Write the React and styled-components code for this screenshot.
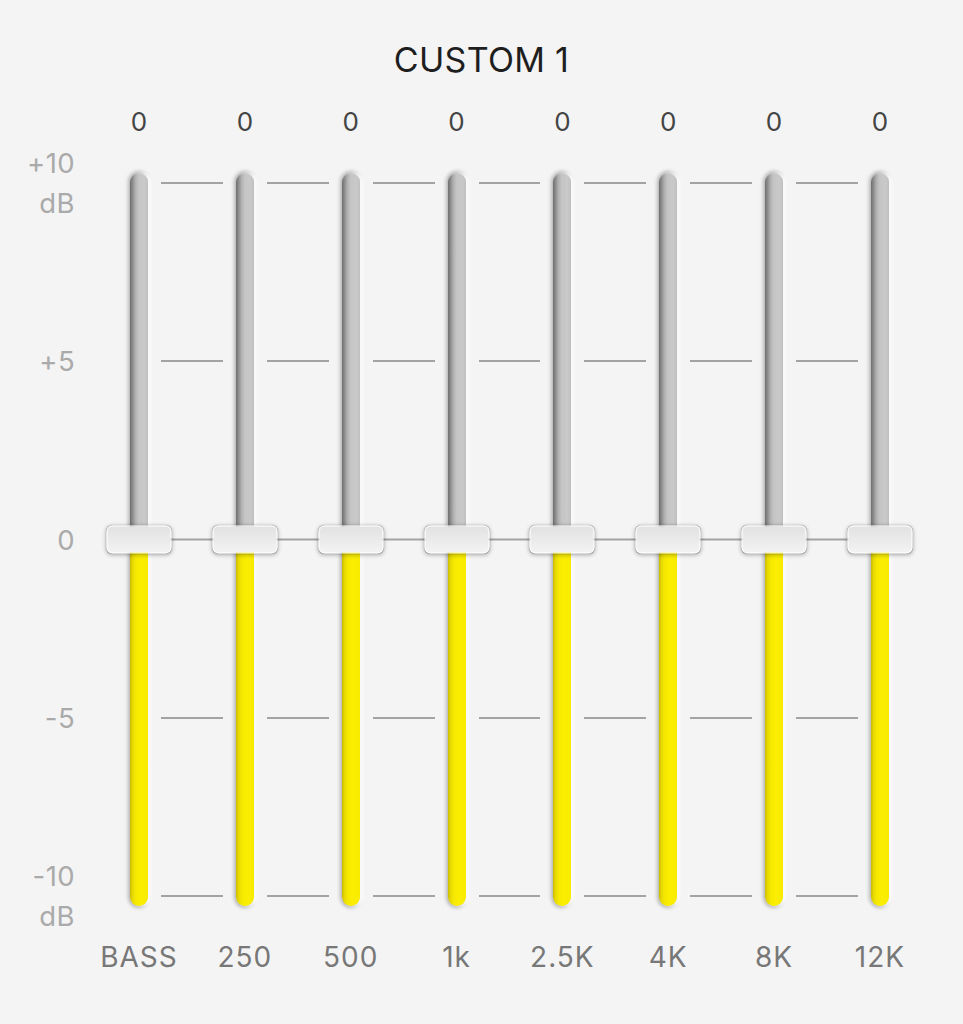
import React from "react";
import styled, { createGlobalStyle } from "styled-components";

const Global = createGlobalStyle`
  html, body { margin: 0; padding: 0; background: #f4f4f4; }
  body { font-family: Inter, "Noto Sans", "Liberation Sans", sans-serif; }
`;

const Page = styled.div`
  width: 963px;
  height: 1024px;
  background: #f4f4f4;
  display: flex;
  flex-direction: column;
  align-items: center;
  padding-top: 39px;
  box-sizing: border-box;
`;

const Title = styled.h1`
  margin: 0;
  font-size: 34px;
  line-height: 42px;
  font-weight: 400;
  color: #1e1e1e;
  letter-spacing: 0.3px;
`;

const Board = styled.div`
  align-self: flex-start;
  margin-top: 23px;
  display: flex;
  flex-direction: row;
`;

const Axis = styled.div`
  width: 130px;
  padding-right: 55px;
  box-sizing: border-box;
  padding-top: 69px;
  display: flex;
  flex-direction: column;
`;

const Scale = styled.div`
  height: 733px;
  padding: 9px 0;
  box-sizing: border-box;
  display: flex;
  flex-direction: column;
  justify-content: space-between;
`;

const Mark = styled.div`
  height: 2px;
  display: flex;
  align-items: center;
  justify-content: flex-end;
`;

const MarkText = styled.span`
  font-size: 27.5px;
  line-height: 40px;
  color: #aaaaaa;
  text-align: right;
  white-space: pre-line;
  letter-spacing: 0.4px;
`;

const Channel = styled.div`
  width: 18px;
  display: flex;
  flex-direction: column;
  align-items: center;
`;

const Value = styled.div`
  height: 36px;
  line-height: 36px;
  font-size: 26px;
  color: #444;
  white-space: nowrap;
  margin-bottom: 33px;
`;

const Band = styled.div`
  height: 36px;
  line-height: 36px;
  font-size: 28px;
  color: #777;
  white-space: nowrap;
  letter-spacing: 1px;
  margin-top: 33px;
`;

const Track = styled.div`
  position: relative;
  width: 18px;
  height: 733px;
  display: flex;
  flex-direction: column;
`;

const Upper = styled.div`
  flex: 1;
  border-radius: 9px 9px 0 0;
  background: linear-gradient(
    90deg,
    #6e6e6e 0%,
    #8c8c8c 14%,
    #b0b0b0 30%,
    #c5c5c5 48%,
    #c9c9c9 80%,
    #c0c0c0 100%
  );
  box-shadow: -2px 0 4px rgba(0, 0, 0, 0.18), 3px 0 3px rgba(255, 255, 255, 0.95),
    0 -2px 4px rgba(0, 0, 0, 0.2);
`;

const Lower = styled.div`
  flex: 1;
  border-radius: 0 0 9px 9px;
  background: linear-gradient(
    90deg,
    #c9bb00 0%,
    #e6d800 14%,
    #f6e900 32%,
    #fbee00 60%,
    #f8eb00 100%
  );
  box-shadow: -2px 0 4px rgba(0, 0, 0, 0.18), 3px 0 3px rgba(255, 255, 255, 0.95),
    0 2px 4px rgba(0, 0, 0, 0.2);
`;

const Thumb = styled.div`
  position: absolute;
  left: 50%;
  top: 50%;
  width: 65px;
  height: 28px;
  transform: translate(-50%, -52%);
  box-sizing: border-box;
  border-radius: 6px;
  border: 1.5px solid #ffffff;
  background: linear-gradient(180deg, #e2e2e2 0%, #ebebeb 55%, #f3f3f3 100%);
  box-shadow: 0 1px 4px rgba(0, 0, 0, 0.3), 0 0 1px rgba(0, 0, 0, 0.25);
  z-index: 2;
`;

const Gap = styled.div`
  width: 87.857px;
  padding-top: 69px;
  display: flex;
  flex-direction: column;
`;

const Rules = styled.div`
  height: 733px;
  padding: 9px 0;
  box-sizing: border-box;
  display: flex;
  flex-direction: column;
  justify-content: space-between;
`;

const Rule = styled.div`
  height: 2px;
  background: #a3a3a3;
  margin: 0 ${(p) => (p.$full ? "0" : "13px")};
  transform: translateY(${(p) => (p.$full ? "-0.5px" : "0")});
`;

const bands = ["BASS", "250", "500", "1k", "2.5K", "4K", "8K", "12K"];
const levels = [
  { label: "+10\ndB", full: false },
  { label: "+5", full: false },
  { label: "0", full: true },
  { label: "-5", full: false },
  { label: "-10\ndB", full: false },
];

export default function App() {
  return (
    <Page>
      <Global />
      <Title>CUSTOM 1</Title>
      <Board>
        <Axis>
          <Scale>
            {levels.map((l) => (
              <Mark key={l.label}>
                <MarkText>{l.label}</MarkText>
              </Mark>
            ))}
          </Scale>
        </Axis>
        {bands.map((b, i) => (
          <React.Fragment key={b}>
            <Channel>
              <Value>0</Value>
              <Track>
                <Upper />
                <Lower />
                <Thumb />
              </Track>
              <Band>{b}</Band>
            </Channel>
            {i < bands.length - 1 && (
              <Gap>
                <Rules>
                  {levels.map((l) => (
                    <Rule key={l.label} $full={l.full} />
                  ))}
                </Rules>
              </Gap>
            )}
          </React.Fragment>
        ))}
      </Board>
    </Page>
  );
}
